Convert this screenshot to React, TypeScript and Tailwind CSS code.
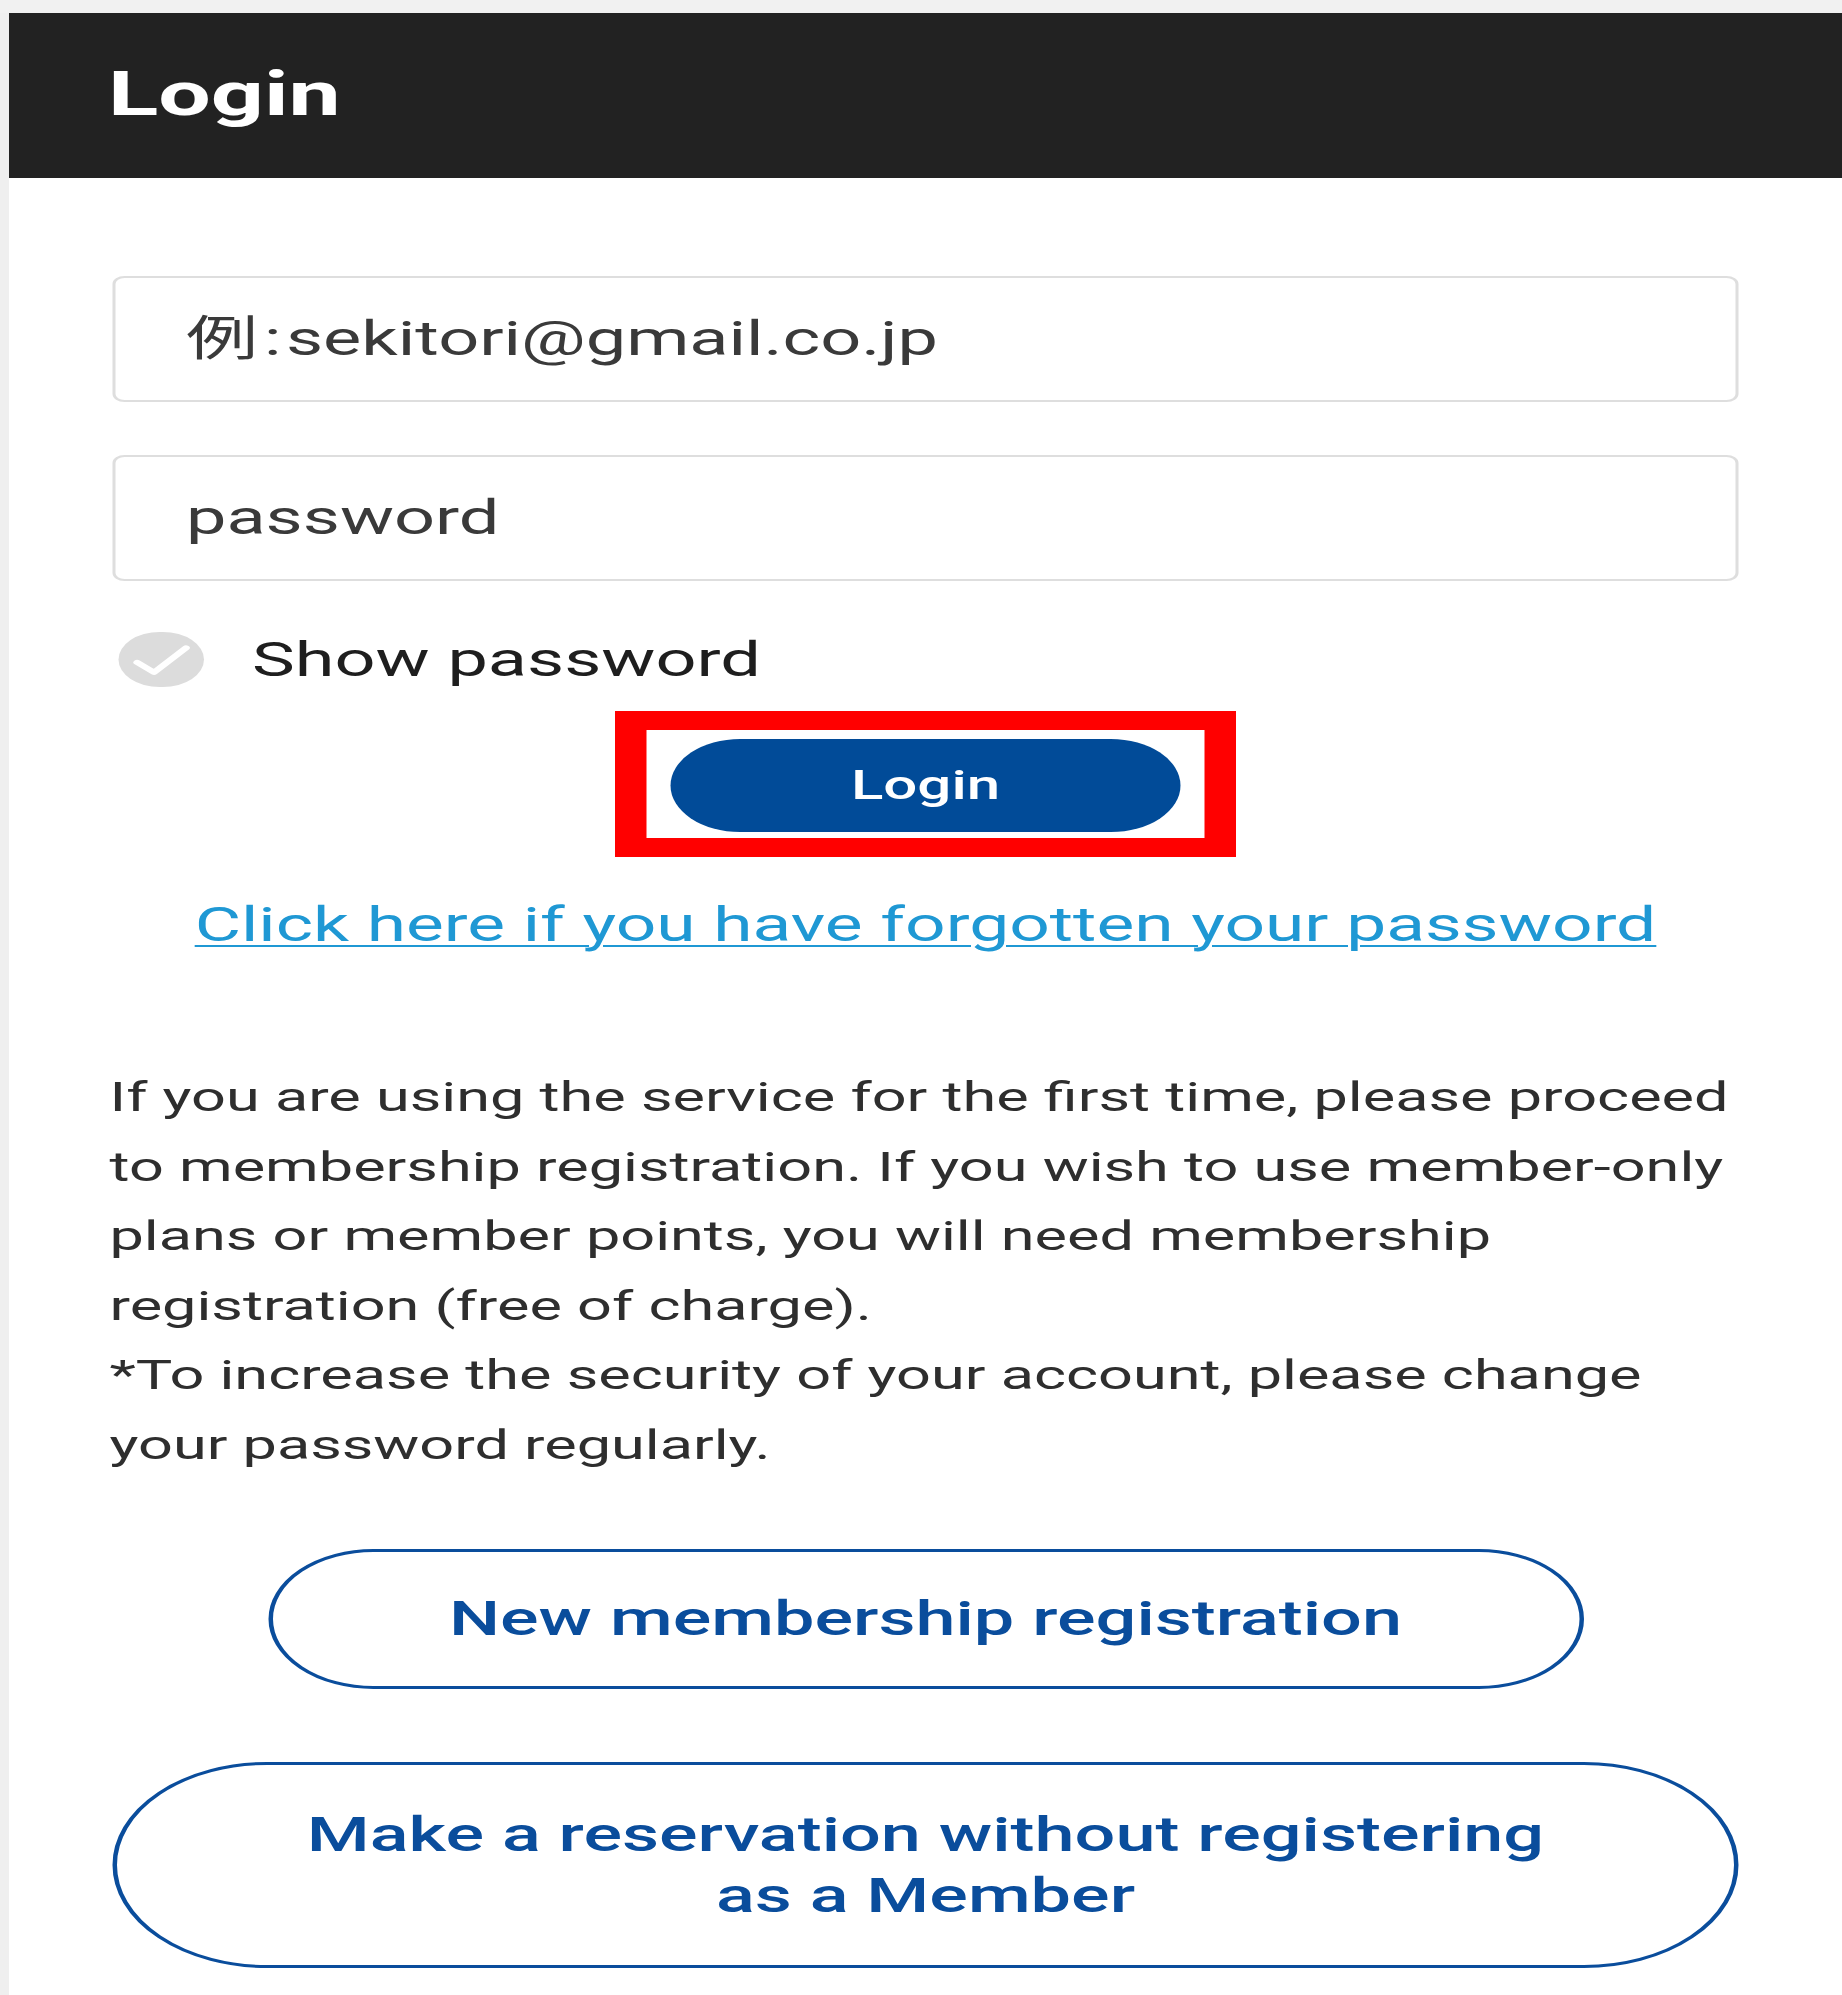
export default function App() {
  return (
    <div className="h-[1995px] w-[1842px] overflow-hidden bg-white font-['Roboto','Noto_Sans_CJK_JP',sans-serif]">
      <div className="h-[13px] bg-[#f1f1f1]" />

      {/* the screenshot is stretched sideways, so the whole page is drawn narrow and scaled */}
      <div className="flex w-[1228px] origin-top-left scale-x-150">
        <div className="w-[6px] shrink-0 bg-[#efefef]" />

        <main className="flex-1">
          <header className="flex h-[165px] items-center bg-[#222222] pb-[4px] pl-[66px]">
            <h1 className="text-[62px] font-bold leading-none text-white">Login</h1>
          </header>

          <div className="px-[69px] pb-[27px] pt-[98px]">
            <div className="flex h-[126px] items-center rounded-[8px] border-2 border-[#dedede] pl-[47px] text-[48px] leading-none text-[#3a3a3a]">
              <span>
                例<span className="ml-[4px] mr-[3px]">:</span>sekitori@gmail.co.jp
              </span>
            </div>

            <div className="mt-[53px] flex h-[126px] items-center rounded-[8px] border-2 border-[#dedede] pl-[47px] text-[48px] leading-none text-[#3a3a3a]">
              password
            </div>

            <label className="ml-[4px] mt-[51px] flex items-center gap-[32px]">
              <span className="flex h-[55px] w-[57px] items-center justify-center rounded-full bg-[#dcdcdc]">
                <svg
                  viewBox="0 0 24 24"
                  className="h-[55px] w-[57px]"
                  fill="none"
                  stroke="white"
                  strokeWidth="2.2"
                  strokeLinecap="round"
                  strokeLinejoin="round"
                >
                  <path d="M5 13.3L9.9 17.6L19.2 6.9" />
                </svg>
              </span>
              <span className="text-[48px] leading-none text-[#1e1e1e]">Show password</span>
            </label>

            <div className="mt-[24px] flex justify-center">
              <div className="border-x-[21px] border-y-[19px] border-[#ff0000] px-[16px] pb-[6px] pt-[9px]">
                <button className="h-[93px] w-[340px] rounded-full bg-[#014b98] text-[40px] font-medium text-white">
                  Login
                </button>
              </div>
            </div>

            <div className="mt-[40px] text-center">
              <a
                href="#"
                className="text-[47.5px] leading-[56px] text-[#1f98d4] underline decoration-2 underline-offset-[4px]"
              >
                Click here if you have forgotten your password
              </a>
            </div>

            <p className="-ml-[2px] -mr-[12px] mt-[110px] text-[40.8px] leading-[69.5px] text-[#2e2e2e]">
              If you are using the service for the first time, please proceed to membership
              registration. If you wish to use member-only plans or member points, you will need
              membership registration (free of charge).
              <br />
              *To increase the security of your account, please change your password regularly.
            </p>

            <div className="mt-[69px] flex justify-center">
              <button className="h-[140px] w-[877px] rounded-full border-[3px] border-[#0a4d9c] text-[48px] font-medium text-[#0a4d9c]">
                New membership registration
              </button>
            </div>

            <button className="mt-[73px] flex h-[206px] w-full flex-col items-center justify-center rounded-full border-[3px] border-[#0a4d9c] text-[48px] font-medium leading-[61px] text-[#0a4d9c]">
              <span>Make a reservation without registering</span>
              <span>as a Member</span>
            </button>
          </div>
        </main>
      </div>
    </div>
  );
}
